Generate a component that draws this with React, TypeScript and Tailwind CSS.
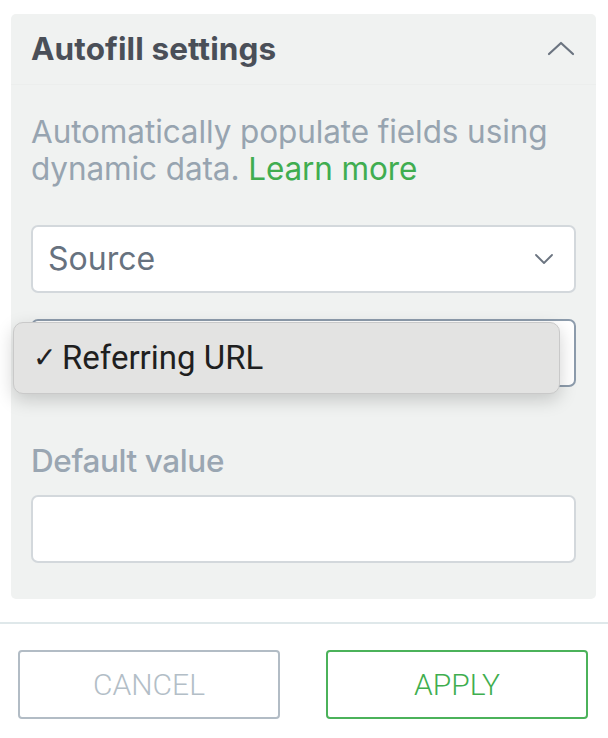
import React from "react";

export default function App() {
  return (
    <div className="relative w-[608px] h-[738px] bg-white overflow-hidden" style={{ fontFamily: "Inter, 'Noto Sans', sans-serif" }}>
      <div className="pt-[14px] pl-[11px] pr-[12px]">
        <div className="bg-[#f0f2f1] rounded-[5px] h-[585px] flex flex-col">
          <div className="h-[71px] flex items-center justify-between pl-[20px] pr-[21px] border-b border-[#eceeed]">
            <div className="text-[31.5px] leading-[40px] font-bold text-[#4a4f58] tracking-[0.1px]">Autofill settings</div>
            <svg width="28" height="16" viewBox="0 0 28 16" fill="none" className="mt-[-2px]">
              <path d="M2 14 L14 3 L26 14" stroke="#6b7480" strokeWidth="2.2" strokeLinecap="round" strokeLinejoin="round" />
            </svg>
          </div>
          <div className="px-[20px] pt-[28px]">
            <p className="text-[31.5px] leading-[37px] text-[#97a4b0] tracking-[-0.1px]">
              Automatically populate fields using dynamic data. <span className="text-[#40ad50]">Learn more</span>
            </p>
            <div className="mt-[38px] h-[68px] bg-white border-2 border-[#d3d8dc] rounded-[7px] flex items-center justify-between pl-[15px] pr-[20px]">
              <span className="text-[32px] text-[#67727f]">Source</span>
              <svg width="20" height="12" viewBox="0 0 20 12" fill="none">
                <path d="M2 2 L10 10 L18 2" stroke="#6b7480" strokeWidth="1.8" strokeLinecap="round" strokeLinejoin="round" />
              </svg>
            </div>
            <div className="mt-[26px] h-[68px] bg-white border-2 border-[#8d9cac] rounded-[7px]" />
            <div className="mt-[58px] text-[31.5px] font-medium text-[#9aa6b2] leading-[32px] tracking-[-0.4px]">Default value</div>
            <div className="mt-[18px] h-[68px] bg-white border-2 border-[#d3d8dc] rounded-[7px]" />
          </div>
        </div>
      </div>
      <div className="mt-[23px] h-[2px] bg-[#dfe8ea]" />
      <div className="mt-[26px] flex pl-[18px] pr-[20px] justify-between" style={{ fontFamily: "Roboto, 'Liberation Sans', sans-serif" }}>
        <button className="w-[262px] h-[69px] border-2 border-[#b2bcc5] rounded-[4px] text-[30px] font-light text-[#b3bec7] flex items-center justify-center">CANCEL</button>
        <button className="w-[262px] h-[69px] border-2 border-[#4bb25a] rounded-[4px] text-[30px] font-light text-[#3fae4f] flex items-center justify-center">APPLY</button>
      </div>
      <div
        className="absolute left-[13px] top-[322px] w-[547px] h-[72px] bg-[#e3e3e2] rounded-[10px] border border-[#c9c9c9] flex items-center pl-[19px] shadow-[0_6px_18px_rgba(0,0,0,0.18)]"
        style={{ fontFamily: "Roboto, 'Liberation Sans', sans-serif" }}
      >
        <span className="text-[28px] font-medium text-[#222] mr-[6px]">✓</span>
        <span className="text-[33px] text-[#1f1f1f]">Referring URL</span>
      </div>
    </div>
  );
}
